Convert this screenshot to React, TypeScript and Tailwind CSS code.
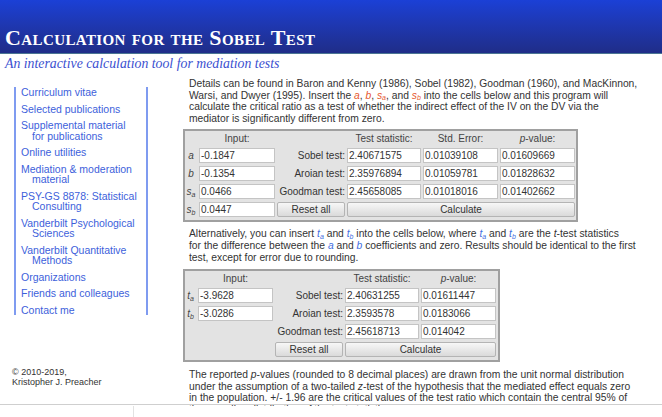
import React from "react";

const sans = "font-['Liberation_Sans',Arial,sans-serif]";

function S({ v, s, c }: { v: string; s?: string; c: string }) {
  return (
    <span className={`italic ${c}`}>
      {v}
      {s ? <sub className="text-[7px]">{s}</sub> : null}
    </span>
  );
}

function Box({ children }: { children?: React.ReactNode }) {
  return (
    <div className="h-[15px] bg-white border border-[#c4c4c4] leading-[13px] pl-[1px] text-[10px] text-[#333] overflow-hidden whitespace-nowrap">
      {children}
    </div>
  );
}

function Btn({ children, span }: { children: React.ReactNode; span?: string }) {
  return (
    <div
      className={`h-[15px] border border-[#b4b4b4] rounded-[2px] bg-gradient-to-b from-[#f7f7f7] to-[#dadada] text-center leading-[13px] text-[10px] text-[#333] ${span ?? ""}`}
    >
      {children}
    </div>
  );
}

function Lbl({ children }: { children: React.ReactNode }) {
  return <div className="h-[15px] leading-[15px] text-right text-[10px] text-[#333] whitespace-nowrap">{children}</div>;
}

function RowLbl({ children }: { children?: React.ReactNode }) {
  return <div className="h-[15px] leading-[15px] text-center text-[10px] text-[#444] italic">{children}</div>;
}

function Head({ children }: { children?: React.ReactNode }) {
  return <div className="h-[13px] leading-[13px] text-center text-[10px] text-[#444]">{children}</div>;
}

function Line({ children }: { children: React.ReactNode }) {
  return <div className="whitespace-nowrap h-[11.6px]">{children}</div>;
}

const navItems: [string, string?][] = [
  ["Curriculum vitae"],
  ["Selected publications"],
  ["Supplemental material", "for publications"],
  ["Online utilities"],
  ["Mediation & moderation", "material"],
  ["PSY-GS 8878: Statistical", "Consulting"],
  ["Vanderbilt Psychological", "Sciences"],
  ["Vanderbilt Quantitative", "Methods"],
  ["Organizations"],
  ["Friends and colleagues"],
  ["Contact me"],
];

export default function App() {
  const orange = "text-[#e6582e]";
  const blue = "text-[#3f6ee0]";
  return (
    <div className={`w-[662px] h-[417px] overflow-hidden bg-white relative ${sans}`}>
      <div className="h-[406px] overflow-hidden">
        {/* header */}
        <div className="h-[54px] bg-gradient-to-b from-[#1b40d6] to-[#1f2d88] border-b border-[#4a7593] pt-[27px] pl-[5px]">
          <h1 className="font-['Liberation_Serif',serif] font-bold text-white text-[22px] tracking-[0.4px] leading-none [font-variant:small-caps] whitespace-nowrap">
            Calculation for the Sobel Test
          </h1>
        </div>
        <div className="pl-[5px] h-[19px] font-['Liberation_Serif',serif] italic text-[#3a4fd0] text-[13.8px] leading-[19px] whitespace-nowrap">
          An interactive calculation tool for mediation tests
        </div>

        <div className="flex">
          {/* sidebar */}
          <div className="w-[183px] shrink-0 flex flex-col">
            <nav className="mt-[14px] ml-[14px] w-[134px] border-x-2 border-[#7f9bf0] pl-[5px] flex flex-col gap-[6px]">
              {navItems.map(([a, b]) => (
                <div key={a} className="text-[10.5px] leading-[10.5px] text-[#3d5fdb] whitespace-nowrap">
                  <div>{a}</div>
                  {b ? <div className="pl-[11px]">{b}</div> : null}
                </div>
              ))}
            </nav>
            <div className="mt-[53px] ml-[12px] text-[9px] leading-[9.5px] text-[#333]">
              <div>© 2010-2019,</div>
              <div>Kristopher J. Preacher</div>
            </div>
          </div>

          {/* main */}
          <div className="flex-1 pt-[5px] text-[#333]">
            <div className="pl-[6px] text-[10.3px] leading-[11.6px]">
              <Line>Details can be found in Baron and Kenny (1986), Sobel (1982), Goodman (1960), and MacKinnon,</Line>
              <Line>
                Warsi, and Dwyer (1995). Insert the <S v="a" c={orange} />, <S v="b" c={orange} />, <S v="s" s="a" c={orange} />, and{" "}
                <S v="s" s="b" c={orange} /> into the cells below and this program will
              </Line>
              <Line>calculate the critical ratio as a test of whether the indirect effect of the IV on the DV via the</Line>
              <Line>mediator is significantly different from zero.</Line>
            </div>

            {/* table 1 */}
            <div className="mt-[5px] w-[395px] border-2 border-[#a0a0a0] bg-[#e3e3e3] pt-[1px] pb-[3px] pr-[1px]">
              <div className="grid grid-cols-[12px_76px_68px_74px_75px_75px] gap-x-[2px] gap-y-[3px]">
                <Head />
                <Head>Input:</Head>
                <Head />
                <Head>Test statistic:</Head>
                <Head>Std. Error:</Head>
                <Head>
                  <i>p</i>-value:
                </Head>

                <RowLbl>a</RowLbl>
                <Box>-0.1847</Box>
                <Lbl>Sobel test:</Lbl>
                <Box>2.40671575</Box>
                <Box>0.01039108</Box>
                <Box>0.01609669</Box>

                <RowLbl>b</RowLbl>
                <Box>-0.1354</Box>
                <Lbl>Aroian test:</Lbl>
                <Box>2.35976894</Box>
                <Box>0.01059781</Box>
                <Box>0.01828632</Box>

                <RowLbl>
                  s<sub className="text-[7px]">a</sub>
                </RowLbl>
                <Box>0.0466</Box>
                <Lbl>Goodman test:</Lbl>
                <Box>2.45658085</Box>
                <Box>0.01018016</Box>
                <Box>0.01402662</Box>

                <RowLbl>
                  s<sub className="text-[7px]">b</sub>
                </RowLbl>
                <Box>0.0447</Box>
                <Btn>Reset all</Btn>
                <Btn span="col-span-3">Calculate</Btn>
              </div>
            </div>

            <div className="mt-[6px] pl-[6px] text-[10.3px] leading-[11.6px]">
              <Line>
                Alternatively, you can insert <S v="t" s="a" c={blue} /> and <S v="t" s="b" c={blue} /> into the cells below, where{" "}
                <S v="t" s="a" c={blue} /> and <S v="t" s="b" c={blue} /> are the <i>t</i>-test statistics
              </Line>
              <Line>
                for the difference between the <S v="a" c={blue} /> and <S v="b" c={blue} /> coefficients and zero. Results should be identical to the first
              </Line>
              <Line>test, except for error due to rounding.</Line>
            </div>

            {/* table 2 */}
            <div className="mt-[6px] w-[317px] border-2 border-[#a0a0a0] bg-[#e3e3e3] pt-[1px] pb-[3px] pr-[2px]">
              <div className="grid grid-cols-[11px_75px_68px_74px_75px] gap-x-[2px] gap-y-[3px]">
                <Head />
                <Head>Input:</Head>
                <Head />
                <Head>Test statistic:</Head>
                <Head>
                  <i>p</i>-value:
                </Head>

                <RowLbl>
                  t<sub className="text-[7px]">a</sub>
                </RowLbl>
                <Box>-3.9628</Box>
                <Lbl>Sobel test:</Lbl>
                <Box>2.40631255</Box>
                <Box>0.01611447</Box>

                <RowLbl>
                  t<sub className="text-[7px]">b</sub>
                </RowLbl>
                <Box>-3.0286</Box>
                <Lbl>Aroian test:</Lbl>
                <Box>2.3593578</Box>
                <Box>0.0183066</Box>

                <RowLbl />
                <div />
                <Lbl>Goodman test:</Lbl>
                <Box>2.45618713</Box>
                <Box>0.014042</Box>

                <RowLbl />
                <div />
                <Btn>Reset all</Btn>
                <Btn span="col-span-2">Calculate</Btn>
              </div>
            </div>

            <div className="mt-[7px] pl-[6px] text-[10.3px] leading-[11.6px]">
              <Line>
                The reported <i>p</i>-values (rounded to 8 decimal places) are drawn from the unit normal distribution
              </Line>
              <Line>
                under the assumption of a two-tailed <i>z</i>-test of the hypothesis that the mediated effect equals zero
              </Line>
              <Line>in the population. +/- 1.96 are the critical values of the test ratio which contain the central 95% of</Line>
              <Line>the sampling distribution of the test statistic.</Line>
            </div>
          </div>
        </div>
      </div>
      {/* line over the clipped bottom edge */}
      <div className="absolute left-0 right-0 top-[404px] h-px bg-[#cfcfcf]" />
      <div className="h-[11px] flex">
        <div className="w-[133px]" />
        <div className="w-px h-full bg-[#e2e2e2]" />
      </div>
    </div>
  );
}
